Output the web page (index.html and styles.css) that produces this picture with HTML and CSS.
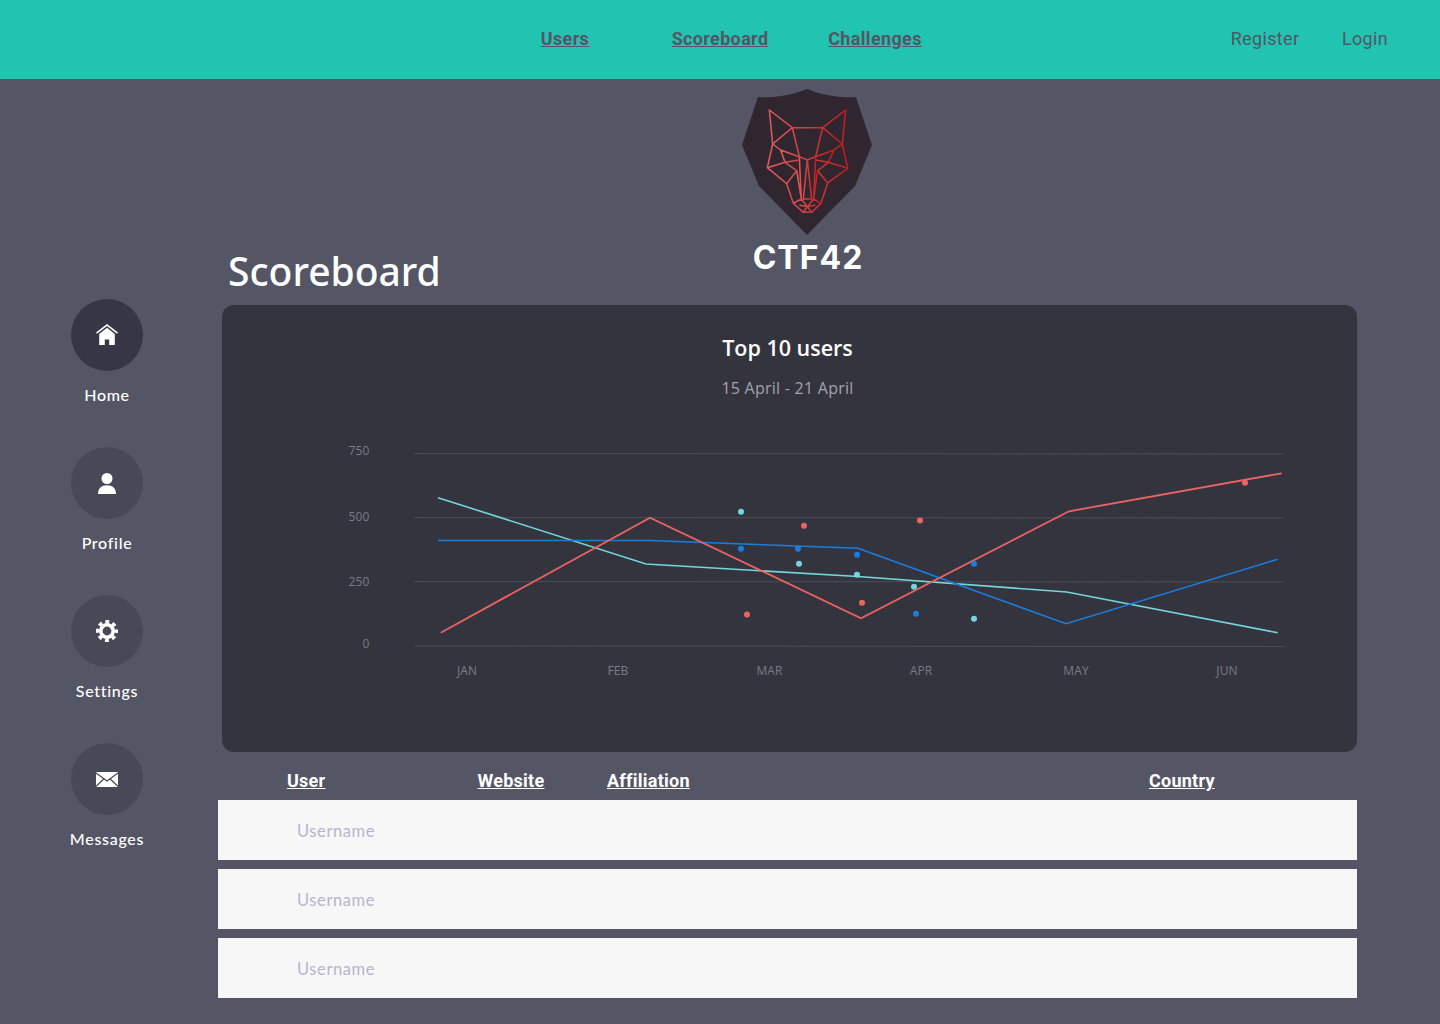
FILE: index.html
```html
<!DOCTYPE html>
<html lang="en">
<head>
<meta charset="utf-8">
<title>CTF42 Scoreboard</title>
<link rel="stylesheet" href="styles.css">
</head>
<body>
<header class="topbar">
  <nav class="main-nav">
    <a href="#">Users</a>
    <a href="#">Scoreboard</a>
    <a href="#">Challenges</a>
  </nav>
  <nav class="auth-nav">
    <a href="#">Register</a>
    <a href="#">Login</a>
  </nav>
</header>
<div class="layout">
  <aside class="sidebar">
    <a class="side-item" href="#">
      <span class="side-circle active">
        <svg width="22" height="22" viewBox="0 0 22 22"><path fill="#fff" d="M11 0 L22 8.6 L21 9.8 L11 2 L1 9.8 L0 8.6Z"/><path fill="#fff" d="M3.2 10 L11 3.8 L18.8 10 V21 H13.2 V15.5 H8.8 V21 H3.2Z"/></svg>
      </span>
      <span class="side-label">Home</span>
    </a>
    <a class="side-item" href="#">
      <span class="side-circle">
        <svg width="18" height="21" viewBox="0 0 18 21"><circle fill="#fff" cx="9" cy="5.5" r="5.5"/><path fill="#fff" d="M0 21 C0 15 3.5 12.2 9 12.2 S18 15 18 21Z"/></svg>
      </span>
      <span class="side-label">Profile</span>
    </a>
    <a class="side-item" href="#">
      <span class="side-circle">
        <svg width="22" height="22" viewBox="0 0 22 22"><circle cx="11" cy="11" r="6.2" fill="none" stroke="#fff" stroke-width="3.6"/><circle cx="11" cy="11" r="9.3" fill="none" stroke="#fff" stroke-width="3.4" stroke-dasharray="3.9 3.4" stroke-dashoffset="1.95"/></svg>
      </span>
      <span class="side-label">Settings</span>
    </a>
    <a class="side-item" href="#">
      <span class="side-circle">
        <svg width="22" height="15" viewBox="0 0 22 15"><rect width="22" height="15" rx="1" fill="#fff"/><path fill="none" stroke="#484957" stroke-width="1.3" d="M0 1 L11 9 L22 1 M0 14.4 L8 6.8 M22 14.4 L14 6.8"/></svg>
      </span>
      <span class="side-label">Messages</span>
    </a>
  </aside>
  <main class="content">
    <div class="page-head">
      <h1 class="page-title">Scoreboard</h1>
      <div class="brand">
        <svg class="brand-logo" width="130" height="146" viewBox="742 89 130 146">
          <defs>
            <linearGradient id="wolfline" x1="0" x2="1" y1="0" y2="0">
              <stop offset="0" stop-color="#e05c5c"/>
              <stop offset="1" stop-color="#c01c20"/>
            </linearGradient>
          </defs>
          <path fill="#30262f" d="M807 89 C790 96 772 98 758 97 L742 145 L759 186 L807 235 L855 186 L872 145 L856 97 C842 98 824 96 807 89Z"/>
          <g transform="translate(760 105) scale(.3333)" fill="none" stroke="url(#wolfline)" stroke-width="4.6" stroke-linejoin="round">
            <path d="M28 15 L97 68 H188 L257 15 L247 117 L263 190 L203 234 L183 295 L155 322 H130 L100 295 L80 236 L22 188 L38 117Z"/>
            <path d="M97 68 L38 117 M97 68 L118 155 M188 68 L247 117 M188 68 L167 155 M38 117 L62 135 M247 117 L222 135"/>
            <path d="M62 135 L118 155 L142 165 L167 155 L222 135 M62 135 L75 172 M222 135 L205 172"/>
            <path d="M22 188 L75 172 L118 165 M263 190 L205 172 L167 165 M80 236 L110 197 L75 172 M203 234 L173 197 L205 172"/>
            <path d="M118 155 L124 282 M167 155 L161 282 M142 165 L130 282 H155 L142 165 M110 197 L124 282 M173 197 L161 282"/>
            <path d="M100 295 L124 282 L142 305 L161 282 L183 295 M130 322 L142 305 L155 322 M118 300 L142 305 L167 300"/>
          </g>
        </svg>
        <div class="brand-name">CTF42</div>
      </div>
    </div>
    <section class="chart-card">
      <h2 class="chart-title">Top 10 users</h2>
      <p class="chart-sub">15 April - 21 April</p>
      <svg class="chart" width="1135" height="290" viewBox="222 430 1135 290">
        <g class="grid-lines">
          <line x1="414" y1="453.5" x2="1284" y2="454"/>
          <line x1="414" y1="517.5" x2="1284" y2="518"/>
          <line x1="414" y1="581.5" x2="1284" y2="582"/>
          <line x1="414" y1="646" x2="1284" y2="646.5"/>
        </g>
        <g class="y-labels">
          <text x="369.5" y="455">750</text>
          <text x="369.5" y="521">500</text>
          <text x="369.5" y="585.5">250</text>
          <text x="369.5" y="648">0</text>
        </g>
        <g class="x-labels">
          <text x="467" y="675">JAN</text>
          <text x="618" y="675">FEB</text>
          <text x="769.5" y="675">MAR</text>
          <text x="921" y="675">APR</text>
          <text x="1076" y="675">MAY</text>
          <text x="1227" y="675">JUN</text>
        </g>
        <polyline class="line teal" points="438,497.7 646,564 858,576.5 1066.7,592 1277.7,632.7"/>
        <polyline class="line blue" points="438,540.5 650,540.5 858,548.3 1066,623.7 1277.7,559.3"/>
        <polyline class="line red" points="440.7,632.7 650,517.7 861,618.3 1069,511.3 1281.7,473.3"/>
        <g class="teal-dots">
          <circle cx="741" cy="511.7" r="3"/><circle cx="799" cy="563.7" r="3"/><circle cx="857" cy="574.7" r="3"/><circle cx="914" cy="586.7" r="3"/><circle cx="974" cy="618.7" r="3"/>
        </g>
        <g class="red-dots">
          <circle cx="804" cy="525.7" r="3"/><circle cx="747" cy="614.5" r="3"/><circle cx="862" cy="602.7" r="3"/><circle cx="920" cy="520.5" r="3"/><circle cx="1245" cy="482.7" r="3"/>
        </g>
        <g class="blue-dots">
          <circle cx="741" cy="548.7" r="3"/><circle cx="798" cy="548.7" r="3"/><circle cx="857" cy="554.7" r="3"/><circle cx="916" cy="613.7" r="3"/><circle cx="974" cy="563.7" r="3"/>
        </g>
      </svg>
    </section>
    <div class="table-head">
      <a href="#">User</a>
      <a href="#">Website</a>
      <a href="#">Affiliation</a>
      <a href="#">Country</a>
    </div>
    <div class="rows">
      <div class="row">Username</div>
      <div class="row">Username</div>
      <div class="row">Username</div>
    </div>
  </main>
</div>
</body>
</html>
```
FILE: styles.css
```css
* { box-sizing: border-box; }
html, body { margin: 0; padding: 0; }
body {
  height: 1024px;
  overflow: hidden;
  background: #555665;
  font-family: "Roboto", "Liberation Sans", sans-serif;
}
a { color: inherit; }

.topbar {
  height: 79px;
  display: flex;
  align-items: center;
  justify-content: space-between;
  padding: 0 25px 2px 487.5px;
  background: #20c4b1;
  color: #555665;
  font-size: 18px;
  letter-spacing: .35px;
}
.main-nav { display: grid; grid-template-columns: repeat(3, 155px); justify-items: center; font-weight: 700; }
.auth-nav { display: grid; grid-template-columns: repeat(2, 100px); justify-items: center; }
.auth-nav a { text-decoration: none; }

.layout { display: flex; align-items: flex-start; }

.sidebar {
  width: 218px;
  flex: none;
  padding: 220px 0 0 57px;
  display: flex;
  flex-direction: column;
}
.side-item {
  width: 100px;
  height: 148px;
  display: flex;
  flex-direction: column;
  align-items: center;
  text-decoration: none;
  color: #fff;
}
.side-circle {
  width: 72px;
  height: 72px;
  border-radius: 50%;
  background: #484957;
  display: flex;
  align-items: center;
  justify-content: center;
}
.side-circle.active { background: #363644; }
.side-label {
  margin-top: 14px;
  font-family: "Lato", sans-serif;
  font-size: 16px;
  line-height: 20px;
  font-weight: 500;
  letter-spacing: .7px;
  white-space: nowrap;
}

.content { width: 1139px; flex: none; }

.page-head { display: grid; height: 226px; }
.page-title, .brand { grid-area: 1 / 1; }
.page-title {
  align-self: end;
  margin: 0 0 9px 10px;
  font-family: "Noto Sans", sans-serif;
  font-size: 39px;
  line-height: 50px;
  font-weight: 500;
  color: #fff;
}
.brand {
  margin: 10px 0 0 524px;
  width: 130px;
  display: flex;
  flex-direction: column;
  align-items: center;
}
.brand-logo { display: block; }
.brand-name {
  margin: 3px 0 0 2px;
  font-family: "Inter", sans-serif;
  font-size: 32px;
  line-height: 40px;
  font-weight: 700;
  letter-spacing: 1px;
  color: #fff;
  white-space: nowrap;
}

.chart-card {
  margin-left: 4px;
  height: 447px;
  padding-top: 28px;
  border-radius: 12px;
  background: #34343f;
  text-align: center;
}
.chart-title {
  margin: 0;
  padding-right: 4px;
  font-family: "Open Sans", sans-serif;
  font-size: 21.5px;
  line-height: 30px;
  font-weight: 600;
  color: #fff;
}
.chart-sub {
  margin: 15px 0 0;
  padding-right: 4px;
  font-family: "Open Sans", sans-serif;
  font-size: 16px;
  line-height: 20px;
  letter-spacing: .25px;
  color: #a3a3ab;
}
.chart { display: block; margin-top: 32px; }
.grid-lines line { stroke: #4d4d58; stroke-width: 1; }
.y-labels text, .x-labels text {
  font-family: "Open Sans", sans-serif;
  font-size: 12px;
  letter-spacing: .1px;
  fill: #7a7a86;
}
.y-labels text { text-anchor: end; }
.x-labels text { text-anchor: middle; }
.line { fill: none; stroke-width: 1.6; }
.line.teal { stroke: #73d6da; }
.line.blue { stroke: #1a7de0; }
.line.red { stroke: #ec6363; stroke-width: 1.8; }
.teal-dots { fill: #73d6da; }
.blue-dots { fill: #1a7de0; }
.red-dots { fill: #ec6363; }

.table-head {
  height: 48px;
  padding: 18px 0 0 69px;
  display: grid;
  grid-template-columns: 190.5px 129.5px 542px auto;
  align-items: start;
  font-size: 18px;
  line-height: 22px;
  font-weight: 700;
  letter-spacing: .25px;
  color: #fff;
}
.table-head a { justify-self: start; }

.rows { display: flex; flex-direction: column; gap: 9px; }
.row {
  height: 60px;
  padding: 1px 0 0 79px;
  display: flex;
  align-items: center;
  background: #f7f7f8;
  font-family: "Lato", sans-serif;
  font-size: 16.5px;
  letter-spacing: .6px;
  color: #b8b5cc;
}
```
